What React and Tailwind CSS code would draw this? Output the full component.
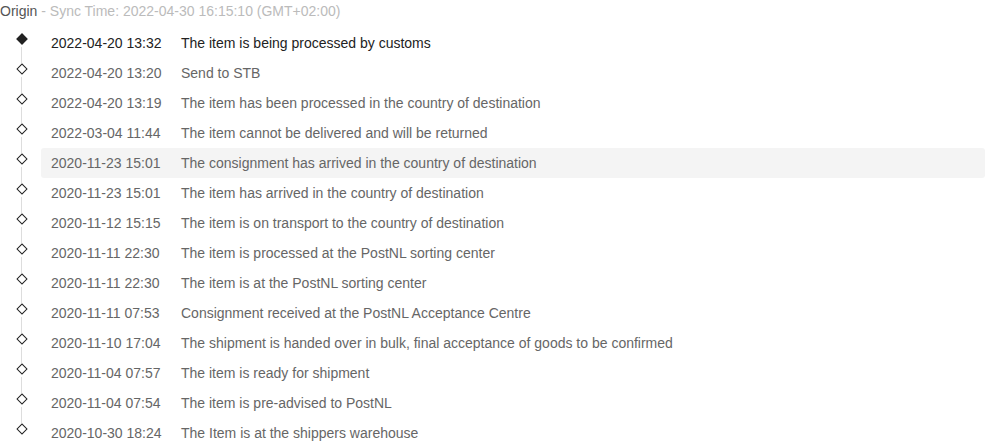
const rows = [
  ["2022-04-20 13:32", "The item is being processed by customs"],
  ["2022-04-20 13:20", "Send to STB"],
  ["2022-04-20 13:19", "The item has been processed in the country of destination"],
  ["2022-03-04 11:44", "The item cannot be delivered and will be returned"],
  ["2020-11-23 15:01", "The consignment has arrived in the country of destination"],
  ["2020-11-23 15:01", "The item has arrived in the country of destination"],
  ["2020-11-12 15:15", "The item is on transport to the country of destination"],
  ["2020-11-11 22:30", "The item is processed at the PostNL sorting center"],
  ["2020-11-11 22:30", "The item is at the PostNL sorting center"],
  ["2020-11-11 07:53", "Consignment received at the PostNL Acceptance Centre"],
  ["2020-11-10 17:04", "The shipment is handed over in bulk, final acceptance of goods to be confirmed"],
  ["2020-11-04 07:57", "The item is ready for shipment"],
  ["2020-11-04 07:54", "The item is pre-advised to PostNL"],
  ["2020-10-30 18:24", "The Item is at the shippers warehouse"],
];

export default function App() {
  return (
    <div className="w-[987px] h-[447px] bg-white overflow-hidden font-['Liberation_Sans',Arial,sans-serif] text-[14px]">
      <div className="h-[22px] flex items-center leading-none">
        <span className="text-[#555]">Origin</span>
        <span className="text-[#bbb]">&nbsp;- Sync Time: 2022-04-30 16:15:10 (GMT+02:00)</span>
      </div>
      <div className="pt-[6px]">
        {rows.map(([d, t], i) => (
          <div key={i} className="flex h-[30px]">
            <div className="relative w-[41px] shrink-0">
              <div
                className={`absolute left-[18px] top-[7px] w-[8px] h-[8px] rotate-45 border border-[#222] ${i === 0 ? "bg-[#222]" : "bg-white"}`}
              />
              {i < rows.length - 1 && (
                <div className="absolute left-[21px] top-[19px] w-px h-[16px] bg-[#ddd]" />
              )}
            </div>
            <div
              className={`flex flex-1 items-center mr-[2px] rounded-[3px] ${i === 4 ? "bg-[#f4f4f4]" : ""}`}
            >
              <span className={`w-[140px] pl-[10px] shrink-0 ${i === 0 ? "text-[#222]" : "text-[#666]"}`}>{d}</span>
              <span className={i === 0 ? "text-[#222]" : "text-[#666]"}>{t}</span>
            </div>
          </div>
        ))}
      </div>
    </div>
  );
}
